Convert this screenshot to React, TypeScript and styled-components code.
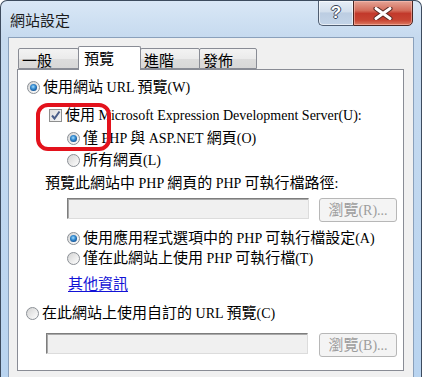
import React from 'react'
import styled, { createGlobalStyle } from 'styled-components'

const GlobalStyle = createGlobalStyle`
  html, body {
    margin: 0;
    padding: 0;
    background: #ffffff;
  }
  body {
    font-family: "Noto Sans CJK TC", "Liberation Serif", sans-serif;
    font-size: 15px;
    color: #000;
  }
`

const Window = styled.div`
  position: relative;
  width: 422px;
  height: 377px;
  box-sizing: border-box;
  border: 1px solid #3d4b5e;
  border-bottom: none;
  border-radius: 7px 7px 0 0;
  background: linear-gradient(#d9e7f6, #c6daef 36px, #b9d4f0);
  display: flex;
  flex-direction: column;
  overflow: hidden;
`

const Caption = styled.div`
  height: 36px;
  flex-shrink: 0;
  display: flex;
  align-items: flex-start;
`

const Title = styled.div`
  flex: 1;
  margin: 9px 0 0 9px;
  line-height: 20px;
  color: #1b1b1b;
`

const CaptionButtons = styled.div`
  display: flex;
  margin: -1px 8px 0 0;
`

const HelpButton = styled.div`
  width: 35px;
  height: 26px;
  box-sizing: border-box;
  border: 1px solid #4f5d71;
  border-right: none;
  border-radius: 0 0 0 5px;
  background: linear-gradient(#e6eef7, #d2deec 45%, #bccde2 50%, #c3d4e8);
  box-shadow: inset 0 0 0 1px rgba(255, 255, 255, 0.6);
  display: flex;
  align-items: center;
  justify-content: center;
  font-family: "Liberation Sans", sans-serif;
  font-weight: bold;
  font-size: 17px;
  color: #fff;
  text-shadow: -1px 0 #3a4658, 1px 0 #3a4658, 0 -1px #3a4658, 0 1px #3a4658;
`

const CloseButton = styled.div`
  width: 60px;
  height: 26px;
  box-sizing: border-box;
  border: 1px solid #4b2622;
  border-radius: 0 0 5px 0;
  background: linear-gradient(#e5a597, #d36c5a 40%, #c2392b 52%, #c84533 80%, #dc7b62);
  box-shadow: inset 0 0 0 1px rgba(255, 200, 190, 0.5);
  display: flex;
  align-items: center;
  justify-content: center;
`

const Client = styled.div`
  flex: 1;
  margin: 0 7px;
  border: 1px solid #8aa0bb;
  border-bottom: none;
  background: #f0f0f0;
  padding: 8px 9px 0 8px;
`

const TabStrip = styled.div`
  display: flex;
  align-items: flex-end;
  height: 23px;
  padding-left: 1px;
`

const Tab = styled.div<{ $w: number; $active?: boolean }>`
  position: relative;
  width: ${(p) => p.$w}px;
  height: ${(p) => (p.$active ? 24 : 21)}px;
  box-sizing: border-box;
  margin-left: -1px;
  margin-bottom: ${(p) => (p.$active ? -1 : 0)}px;
  z-index: ${(p) => (p.$active ? 2 : 1)};
  border: 1px solid #898c95;
  border-bottom: ${(p) => (p.$active ? 'none' : '1px solid #898c95')};
  border-radius: 2px 2px 0 0;
  background: ${(p) => (p.$active ? '#ffffff' : 'linear-gradient(#f3f3f3, #ebebeb 50%, #dddddd 51%, #d8d8d8)')};
  padding: ${(p) => (p.$active ? '1px 0 0 5px' : '1px 0 0 3px')};
  line-height: 19px;
  &:first-child {
    margin-left: 0;
  }
`

const Page = styled.div`
  position: relative;
  z-index: 1;
  height: 302px;
  box-sizing: border-box;
  border: 1px solid #898c95;
  background: #ffffff;
  display: flex;
  flex-direction: column;
`

const Row = styled.div<{ $indent: number; $mt: number; $h?: number }>`
  display: flex;
  align-items: center;
  height: ${(p) => p.$h ?? 20}px;
  margin-top: ${(p) => p.$mt}px;
  padding-left: ${(p) => p.$indent}px;
  line-height: 20px;
  white-space: nowrap;
`

const Label = styled.span`
  white-space: pre;
`

const Latin = styled.span`
  font-family: "Liberation Serif", serif;
  font-size: 14px;
`

const RadioDot = styled.span<{ $on?: boolean }>`
  position: relative;
  width: 13px;
  height: 13px;
  flex-shrink: 0;
  box-sizing: border-box;
  margin-right: 3px;
  border-radius: 50%;
  border: 1px solid #8b9096;
  background: linear-gradient(135deg, #d3d3d3, #f2f2f2 70%, #fbfbfb);
  &::after {
    content: '';
    display: ${(p) => (p.$on ? 'block' : 'none')};
    position: absolute;
    left: 2px;
    top: 2px;
    width: 7px;
    height: 7px;
    border-radius: 50%;
    background: radial-gradient(circle at 45% 40%, #a7dcfb 0, #3d93d6 35%, #0e4f94 75%, #0b3468 100%);
  }
`

const CheckBox = styled.span`
  width: 13px;
  height: 13px;
  flex-shrink: 0;
  box-sizing: border-box;
  margin-right: 3px;
  border: 1px solid #8e8f8f;
  background: linear-gradient(135deg, #dedede, #f7f7f7);
  display: flex;
  align-items: center;
  justify-content: center;
`

const TextBox = styled.div<{ $w: number }>`
  width: ${(p) => p.$w}px;
  height: 21px;
  box-sizing: border-box;
  border: 1px solid;
  border-color: #7d7d7d #dcdcdc #dcdcdc #7d7d7d;
  box-shadow: inset 1px 1px 0 #a9a9a9;
  background: #f0f0f0;
  flex-shrink: 0;
  align-self: flex-start;
`

const PushButton = styled.div<{ $gap: number }>`
  width: 78px;
  height: 24px;
  box-sizing: border-box;
  margin-left: ${(p) => p.$gap}px;
  border: 1px solid #b7b7b7;
  border-radius: 3px;
  background: #f4f4f4;
  color: #9d9d9d;
  display: flex;
  align-items: center;
  justify-content: center;
  flex-shrink: 0;
`

const Link = styled.span`
  color: #1212d6;
  text-decoration: underline;
  text-underline-offset: 2px;
`

const Highlight = styled.div`
  position: absolute;
  left: 35px;
  top: 102px;
  width: 75px;
  height: 48px;
  box-sizing: border-box;
  border: 4px solid #e3121c;
  border-radius: 12px;
  z-index: 5;
  pointer-events: none;
`

function Txt({ s }: { s: string }) {
  const parts = s.split(/([\x20-\x7E]+)/).filter((p) => p !== '')
  return (
    <Label>
      {parts.map((p, i) => (/^[\x20-\x7E]+$/.test(p) ? <Latin key={i}>{p}</Latin> : <span key={i}>{p}</span>))}
    </Label>
  )
}

export default function App() {
  return (
    <>
      <GlobalStyle />
      <Window>
        <Caption>
          <Title>網站設定</Title>
          <CaptionButtons>
            <HelpButton>?</HelpButton>
            <CloseButton>
              <svg width="20" height="13" viewBox="0 0 20 13">
                <path d="M3 1.5 L17 11.5 M17 1.5 L3 11.5" stroke="#5a2a24" strokeWidth="5" strokeLinecap="round" />
                <path d="M3 1.5 L17 11.5 M17 1.5 L3 11.5" stroke="#ffffff" strokeWidth="3" strokeLinecap="round" />
              </svg>
            </CloseButton>
          </CaptionButtons>
        </Caption>
        <Client>
          <TabStrip>
            <Tab $w={61}>一般</Tab>
            <Tab $w={63} $active>預覽</Tab>
            <Tab $w={60}>進階</Tab>
            <Tab $w={58}>發佈</Tab>
          </TabStrip>
          <Page>
            <Row $indent={9} $mt={7}>
              <RadioDot $on />
              <Txt s="使用網站 URL 預覽(W)" />
            </Row>
            <Row $indent={31} $mt={8}>
              <CheckBox>
                <svg width="11" height="11" viewBox="0 0 11 11">
                  <path d="M2 5.5 L4.5 8.5 L9.5 1.5" fill="none" stroke="#4b5f8a" strokeWidth="2" />
                </svg>
              </CheckBox>
              <Txt s="使用 Microsoft Expression Development Server(U):" />
            </Row>
            <Row $indent={49} $mt={3}>
              <RadioDot $on />
              <Txt s="僅 PHP 與 ASP.NET 網頁(O)" />
            </Row>
            <Row $indent={49} $mt={2}>
              <RadioDot />
              <Txt s="所有網頁(L)" />
            </Row>
            <Row $indent={27} $mt={3}>
              <Txt s="預覽此網站中 PHP 網頁的 PHP 可執行檔路徑:" />
            </Row>
            <Row $indent={49} $mt={5} $h={24}>
              <TextBox $w={242} />
              <PushButton $gap={10}>
                <Txt s="瀏覽(R)..." />
              </PushButton>
            </Row>
            <Row $indent={49} $mt={6}>
              <RadioDot $on />
              <Txt s="使用應用程式選項中的 PHP 可執行檔設定(A)" />
            </Row>
            <Row $indent={49} $mt={0}>
              <RadioDot />
              <Txt s="僅在此網站上使用 PHP 可執行檔(T)" />
            </Row>
            <Row $indent={50} $mt={5}>
              <Link>其他資訊</Link>
            </Row>
            <Row $indent={8} $mt={10}>
              <RadioDot />
              <Txt s="在此網站上使用自訂的 URL 預覽(C)" />
            </Row>
            <Row $indent={28} $mt={10} $h={24}>
              <TextBox $w={262} />
              <PushButton $gap={11}>
                <Txt s="瀏覽(B)..." />
              </PushButton>
            </Row>
          </Page>
        </Client>
        <Highlight />
      </Window>
    </>
  )
}
